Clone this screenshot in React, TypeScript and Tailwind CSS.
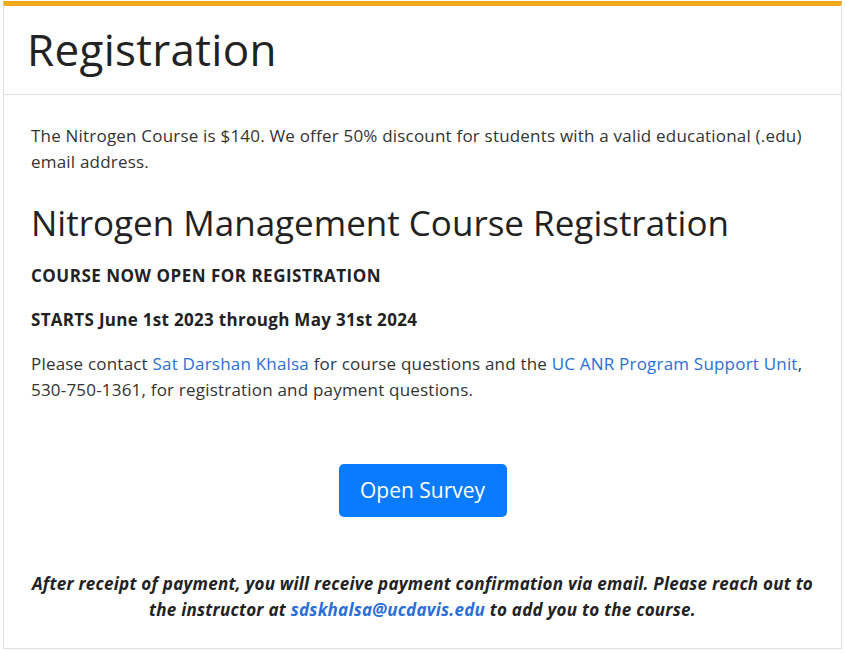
export default function App() {
  return (
    <div className="min-h-[653px] bg-white pt-[1px] px-[3px] font-['Open_Sans',sans-serif] text-[#333]">
      <div className="border border-[#e0e0e0] border-t-[5px] border-t-[#f0aa1e] w-[839px]">
        {/* Header */}
        <div className="h-[89px] border-b border-[#dedede] px-[23px] flex items-center">
          <h1 className="text-[44px] leading-none tracking-[0.3px] text-[#222] pb-[3px]">Registration</h1>
        </div>

        {/* Body */}
        <div className="px-[27px] pt-[28px] pb-[25px]">
          <p className="text-[17px] leading-[26px] tracking-[0.2px]">
            The Nitrogen Course is $140. We offer 50% discount for students with a valid educational (.edu)
            email address.
          </p>
          <h2 className="mt-[28px] text-[35px] leading-[40px] text-[#222]">
            Nitrogen Management Course Registration
          </h2>
          <p className="mt-[20px] text-[17px] leading-[26px] font-bold tracking-[0.5px] text-[#222]">
            COURSE NOW OPEN FOR REGISTRATION
          </p>
          <p className="mt-[18px] text-[17px] leading-[26px] font-bold tracking-[0.3px] text-[#222]">
            STARTS June 1st 2023 through May 31st 2024
          </p>
          <p className="mt-[18px] text-[17px] leading-[26px] tracking-[0.2px]">
            Please contact <a className="text-[#2b6fd6]">Sat Darshan Khalsa</a> for course questions and the{' '}
            <a className="text-[#2b6fd6]">UC ANR Program Support Unit</a>,
            <br />
            530-750-1361, for registration and payment questions.
          </p>

          <div className="mt-[61px] flex justify-center">
            <button className="w-[168px] h-[53px] rounded-[5px] bg-[#0a7bff] text-white text-[21px]">
              Open Survey
            </button>
          </div>

          <p className="-mx-[20px] mt-[54px] whitespace-nowrap text-center italic font-bold text-[17px] leading-[26px] tracking-[0.25px] text-[#222]">
            After receipt of payment, you will receive payment confirmation via email. Please reach out to
            <br />
            the instructor at <a className="text-[#2b6fd6]">sdskhalsa@ucdavis.edu</a> to add you to the course.
          </p>
        </div>
      </div>
    </div>
  );
}
